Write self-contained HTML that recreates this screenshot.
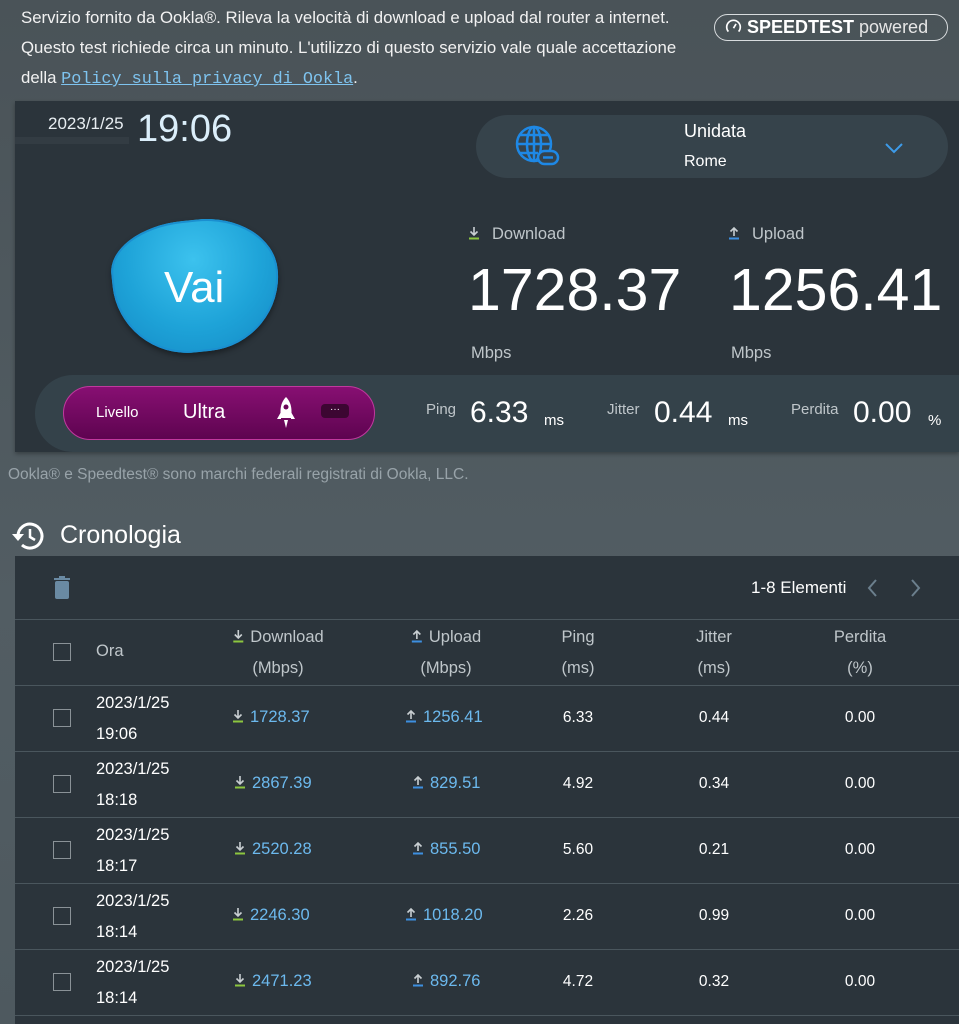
<!DOCTYPE html>
<html><head><meta charset="utf-8"><style>
*{margin:0;padding:0;box-sizing:border-box}
body{width:959px;height:1024px;overflow:hidden;background:linear-gradient(#4a5358,#525d63 600px,#4e595f);font-family:"Liberation Sans",sans-serif;color:#fff;position:relative}
.a{position:absolute;white-space:nowrap}
.intro{left:21px;font-size:16.8px;color:#f2f2f2}
.link{font-family:"Liberation Mono",monospace;color:#7ec3ef;text-decoration:underline}
.panel{position:absolute;left:15px;top:101px;width:944px;height:351px;background:#2b343b;box-shadow:0 2px 4px rgba(0,0,0,.3)}
.strip{position:absolute;left:35px;top:375px;width:924px;height:77px;background:#34424a;border-radius:38px 0 0 38px}
.tbl{position:absolute;left:15px;top:556px;width:944px;height:468px;background:#2b343b}
.line{position:absolute;left:15px;width:944px;height:1px;background:#4a565d}
.cb{position:absolute;left:53px;width:18px;height:18px;border:1.5px solid #8a9297}
.g{color:#bfc6ca}
.blue{color:#6cb9ee}
.c{text-align:center;transform:translateX(-50%)}
.t{font-size:16.5px}
svg.ar{vertical-align:-1px;margin-right:6px}
</style></head><body>
<svg width="0" height="0" style="position:absolute"><defs>
<symbol id="dn" viewBox="0 0 12 14"><path d="M6 1V9M2.5 5.5L6 9L9.5 5.5" fill="none" stroke="#c9cfd2" stroke-width="1.6"/><path d="M1 12.5H11" stroke="#8cc63f" stroke-width="2"/></symbol>
<symbol id="up" viewBox="0 0 12 14"><path d="M6 10V2M2.5 5.5L6 2L9.5 5.5" fill="none" stroke="#c9cfd2" stroke-width="1.6"/><path d="M1 12.5H11" stroke="#3d8fe0" stroke-width="2"/></symbol>
</defs></svg>
<div class="a intro" style="top:8px">Servizio fornito da Ookla®. Rileva la velocità di download e upload dal router a internet.</div>
<div class="a intro" style="top:38px">Questo test richiede circa un minuto. L'utilizzo di questo servizio vale quale accettazione</div>
<div class="a intro" style="top:68px">della <span class="link">Policy sulla privacy di Ookla</span>.</div>
<div class="a" style="left:714px;top:14px;width:234px;height:27px;border:1.5px solid #d8dcde;border-radius:14px;font-size:18px;line-height:24px;padding-left:10px">
<svg width="17" height="17" viewBox="0 0 20 20" style="vertical-align:-2px"><path d="M4 16A8 8 0 1 1 16 16" fill="none" stroke="#fff" stroke-width="2"/><path d="M10 12L13 7" stroke="#fff" stroke-width="2"/></svg><b style="font-size:18px"> SPEEDTEST</b><span style="color:#e6e6e6"> powered</span></div>

<div class="panel"></div>
<div class="a" style="left:15px;top:137px;width:114px;height:7px;background:#333c43"></div>
<div class="a" style="left:48px;top:114px;font-size:17px;color:#e8eef2">2023/1/25</div>
<div class="a" style="left:137px;top:108px;font-size:38px;color:#dbeefa">19:06</div>
<div class="a" style="left:476px;top:115px;width:472px;height:63px;background:#36434b;border-radius:32px"></div>
<svg class="a" style="left:514px;top:124px" width="46" height="46" viewBox="0 0 46 46"><g fill="none" stroke="#1e88e5" stroke-width="2.5"><circle cx="20" cy="20" r="17"/><ellipse cx="20" cy="20" rx="7" ry="17"/><path d="M3 20H37M6 11H34M6 29H24M20 3V37"/></g><rect x="24" y="27" width="20" height="13" rx="6.5" fill="#36434b" stroke="#1e88e5" stroke-width="2.5"/><path d="M29 33.5H39" stroke="#1e88e5" stroke-width="2.5"/></svg>
<div class="a" style="left:684px;top:121px;font-size:18px">Unidata</div>
<div class="a" style="left:684px;top:153px;font-size:16px">Rome</div>
<svg class="a" style="left:884px;top:141px" width="20" height="14"><path d="M2 3L10 11L18 3" fill="none" stroke="#3d9be9" stroke-width="2"/></svg>

<div class="a" style="left:113px;top:220px;width:166px;height:132px;border-radius:50% 50% 50% 50%/38% 48% 62% 62%;background:radial-gradient(circle at 50% 30%,#3cc2ee,#1ea3d8 55%,#1488c4);box-shadow:0 0 0 2px #1a8fd0 inset,0 3px 6px rgba(0,0,0,.4);transform:rotate(-6deg)"></div>
<div class="a" style="left:164px;top:263px;font-size:44px;color:#fff">Vai</div>

<div class="a g" style="left:468px;top:225px;font-size:16.5px"><svg class="ar" width="12" height="14" style="margin-right:12px"><use href="#dn"/></svg>Download</div>
<div class="a g" style="left:728px;top:225px;font-size:16.5px"><svg class="ar" width="12" height="14" style="margin-right:12px"><use href="#up"/></svg>Upload</div>
<div class="a" style="left:468px;top:256px;font-size:59px">1728.37</div>
<div class="a" style="left:729px;top:256px;font-size:59px">1256.41</div>
<div class="a g" style="left:471px;top:344px;font-size:16.5px">Mbps</div>
<div class="a g" style="left:731px;top:344px;font-size:16.5px">Mbps</div>

<div class="strip"></div>
<div class="a" style="left:63px;top:386px;width:312px;height:54px;border-radius:27px;background:linear-gradient(#870f72,#5e0450);border:1.5px solid #c0399e"></div>
<div class="a" style="left:96px;top:404px;font-size:15px">Livello</div>
<div class="a" style="left:183px;top:401px;font-size:20px">Ultra</div>
<svg class="a" style="left:276px;top:396px" width="20" height="34" viewBox="0 0 20 34"><path d="M10 1C4 7 4 15 5 22H15C16 15 16 7 10 1Z" fill="#fff"/><path d="M5 16L1 23H5ZM15 16L19 23H15Z" fill="#fff"/><circle cx="10" cy="11" r="2.5" fill="#6a0558"/><path d="M8 24L10 32L12 24Z" fill="#fff"/></svg>
<div class="a" style="left:321px;top:404px;width:28px;height:14px;border-radius:4px;background:#3c0632;font-size:10px;text-align:center;line-height:12px">···</div>
<div class="a g" style="left:426px;top:401px;font-size:15px">Ping</div>
<div class="a" style="left:470px;top:396px;font-size:30px">6.33</div>
<div class="a" style="left:544px;top:412px;font-size:15px">ms</div>
<div class="a g" style="left:607px;top:401px;font-size:15px">Jitter</div>
<div class="a" style="left:654px;top:396px;font-size:30px">0.44</div>
<div class="a" style="left:728px;top:412px;font-size:15px">ms</div>
<div class="a g" style="left:791px;top:401px;font-size:15px">Perdita</div>
<div class="a" style="left:853px;top:396px;font-size:30px">0.00</div>
<div class="a" style="left:928px;top:412px;font-size:15px">%</div>

<div class="a" style="left:8px;top:466px;font-size:15.5px;color:#98a3a9">Ookla® e Speedtest® sono marchi federali registrati di Ookla, LLC.</div>
<svg class="a" style="left:11px;top:520px" width="34" height="32" viewBox="0 0 34 32"><path d="M7 16A12 12 0 1 1 11 25" fill="none" stroke="#fff" stroke-width="3"/><path d="M1 14L7 21L13 14Z" fill="#fff"/><path d="M19 9V17L24 20" fill="none" stroke="#fff" stroke-width="2.5"/></svg>
<div class="a" style="left:60px;top:521px;font-size:25px">Cronologia</div>

<div class="tbl"></div>
<svg class="a" style="left:53px;top:576px" width="18" height="24" viewBox="0 0 18 24"><rect x="2" y="5" width="14" height="18" rx="2" fill="#6a8aa3"/><rect x="1" y="2" width="16" height="2" fill="#6a8aa3"/><rect x="6" y="0" width="6" height="3" fill="#6a8aa3"/></svg>
<div class="a" style="left:751px;top:578px;font-size:17px">1-8 Elementi</div>
<svg class="a" style="left:864px;top:578px" width="60" height="20"><path d="M12 2L5 10L12 18" fill="none" stroke="#6b7f8d" stroke-width="2"/><path d="M48 2L55 10L48 18" fill="none" stroke="#6b7f8d" stroke-width="2"/></svg>
<div class="line" style="top:619px"></div>
<div class="cb" style="top:643px"></div>
<div class="a g t" style="left:96px;top:642px">Ora</div>
<div class="a g c t" style="left:278px;top:622px;line-height:31px"><svg class="ar" width="12" height="14"><use href="#dn"/></svg>Download<br>(Mbps)</div>
<div class="a g c t" style="left:446px;top:622px;line-height:31px"><svg class="ar" width="12" height="14"><use href="#up"/></svg>Upload<br>(Mbps)</div>
<div class="a g c t" style="left:578px;top:622px;line-height:31px">Ping<br>(ms)</div>
<div class="a g c t" style="left:714px;top:622px;line-height:31px">Jitter<br>(ms)</div>
<div class="a g c t" style="left:860px;top:622px;line-height:31px">Perdita<br>(%)</div>
<div class="line" style="top:685px"></div>

<div class="cb" style="top:709px"></div><div class="a t" style="left:96px;top:688px;line-height:31px">2023/1/25<br>19:06</div>
<div class="a blue t" style="left:232px;top:708px"><svg class="ar" width="12" height="14"><use href="#dn"/></svg>1728.37</div>
<div class="a blue t" style="left:405px;top:708px"><svg class="ar" width="12" height="14"><use href="#up"/></svg>1256.41</div>
<div class="a c" style="left:578px;top:709px;font-size:15.5px">6.33</div><div class="a c" style="left:714px;top:709px;font-size:15.5px">0.44</div><div class="a c" style="left:860px;top:709px;font-size:15.5px">0.00</div>
<div class="line" style="top:751px"></div>

<div class="cb" style="top:775px"></div><div class="a t" style="left:96px;top:754px;line-height:31px">2023/1/25<br>18:18</div>
<div class="a blue t" style="left:234px;top:774px"><svg class="ar" width="12" height="14"><use href="#dn"/></svg>2867.39</div>
<div class="a blue t" style="left:412px;top:774px"><svg class="ar" width="12" height="14"><use href="#up"/></svg>829.51</div>
<div class="a c" style="left:578px;top:775px;font-size:15.5px">4.92</div><div class="a c" style="left:714px;top:775px;font-size:15.5px">0.34</div><div class="a c" style="left:860px;top:775px;font-size:15.5px">0.00</div>
<div class="line" style="top:817px"></div>

<div class="cb" style="top:841px"></div><div class="a t" style="left:96px;top:820px;line-height:31px">2023/1/25<br>18:17</div>
<div class="a blue t" style="left:234px;top:840px"><svg class="ar" width="12" height="14"><use href="#dn"/></svg>2520.28</div>
<div class="a blue t" style="left:412px;top:840px"><svg class="ar" width="12" height="14"><use href="#up"/></svg>855.50</div>
<div class="a c" style="left:578px;top:841px;font-size:15.5px">5.60</div><div class="a c" style="left:714px;top:841px;font-size:15.5px">0.21</div><div class="a c" style="left:860px;top:841px;font-size:15.5px">0.00</div>
<div class="line" style="top:883px"></div>

<div class="cb" style="top:907px"></div><div class="a t" style="left:96px;top:886px;line-height:31px">2023/1/25<br>18:14</div>
<div class="a blue t" style="left:232px;top:906px"><svg class="ar" width="12" height="14"><use href="#dn"/></svg>2246.30</div>
<div class="a blue t" style="left:405px;top:906px"><svg class="ar" width="12" height="14"><use href="#up"/></svg>1018.20</div>
<div class="a c" style="left:578px;top:907px;font-size:15.5px">2.26</div><div class="a c" style="left:714px;top:907px;font-size:15.5px">0.99</div><div class="a c" style="left:860px;top:907px;font-size:15.5px">0.00</div>
<div class="line" style="top:949px"></div>

<div class="cb" style="top:973px"></div><div class="a t" style="left:96px;top:952px;line-height:31px">2023/1/25<br>18:14</div>
<div class="a blue t" style="left:234px;top:972px"><svg class="ar" width="12" height="14"><use href="#dn"/></svg>2471.23</div>
<div class="a blue t" style="left:412px;top:972px"><svg class="ar" width="12" height="14"><use href="#up"/></svg>892.76</div>
<div class="a c" style="left:578px;top:973px;font-size:15.5px">4.72</div><div class="a c" style="left:714px;top:973px;font-size:15.5px">0.32</div><div class="a c" style="left:860px;top:973px;font-size:15.5px">0.00</div>
<div class="line" style="top:1015px"></div>
</body></html>
